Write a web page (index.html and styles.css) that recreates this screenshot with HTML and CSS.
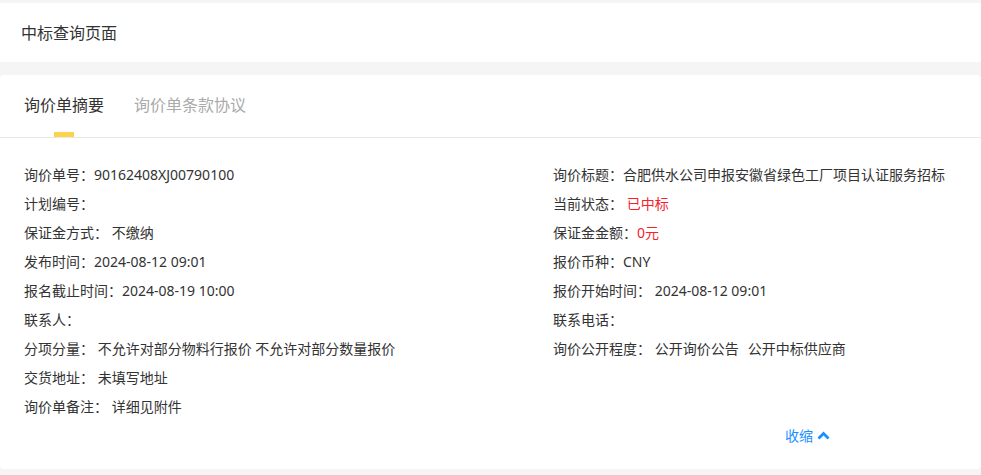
FILE: index.html
```html
<!DOCTYPE html>
<html lang="zh-CN">
<head>
    <meta charset="UTF-8">
    <meta name="viewport" content="width=device-width, initial-scale=1.0">
    <title>中标查询页面</title>
    <link rel="stylesheet" href="styles.css">
</head>
<body>
    <div class="page-header">中标查询页面</div>

    <div class="card">
        <div class="tabs">
            <div class="tab active">询价单摘要</div>
            <div class="tab">询价单条款协议</div>
        </div>

        <div class="summary">
            <div class="col">
                <div class="row"><span class="label">询价单号：</span>90162408XJ00790100</div>
                <div class="row"><span class="label">计划编号：</span></div>
                <div class="row"><span class="label">保证金方式：</span> 不缴纳</div>
                <div class="row"><span class="label">发布时间：</span>2024-08-12 09:01</div>
                <div class="row"><span class="label">报名截止时间：</span>2024-08-19 10:00</div>
                <div class="row"><span class="label">联系人：</span></div>
                <div class="row"><span class="label">分项分量：</span> 不允许对部分物料行报价 不允许对部分数量报价</div>
                <div class="row"><span class="label">交货地址：</span> 未填写地址</div>
                <div class="row"><span class="label">询价单备注：</span> 详细见附件</div>
            </div>
            <div class="col">
                <div class="row"><span class="label">询价标题：</span>合肥供水公司申报安徽省绿色工厂项目认证服务招标</div>
                <div class="row"><span class="label">当前状态：</span> <span class="red">已中标</span></div>
                <div class="row"><span class="label">保证金金额：</span><span class="red">0元</span></div>
                <div class="row"><span class="label">报价币种：</span>CNY</div>
                <div class="row"><span class="label">报价开始时间：</span> 2024-08-12 09:01</div>
                <div class="row"><span class="label">联系电话：</span></div>
                <div class="row"><span class="label">询价公开程度：</span> <span class="tag">公开询价公告</span><span class="tag">公开中标供应商</span></div>
            </div>
        </div>

        <div class="toggle">
            <a class="collapse" href="#">收缩
                <svg width="13" height="9" viewBox="0 0 13 9"><polyline points="1.5,7.5 6.5,2.5 11.5,7.5" fill="none" stroke="#1890ff" stroke-width="2.8"/></svg>
            </a>
        </div>
    </div>
</body>
</html>
```

FILE: styles.css
```css
body {
    margin: 0;
    padding-top: 3px;
    background-color: #f5f5f5;
    font-family: "Noto Sans", "Noto Sans CJK SC", sans-serif;
    color: #333;
}

.page-header {
    height: 59px;
    line-height: 60px;
    padding-left: 21px;
    background-color: #fff;
    font-size: 16px;
    margin-bottom: 13px;
}

.card {
    background-color: #fff;
    border-radius: 4px;
    padding-bottom: 19px;
}

.tabs {
    display: flex;
    gap: 30px;
    padding-left: 24px;
    height: 62px;
    border-bottom: 1px solid #e8e8e8;
}

.tab {
    position: relative;
    font-size: 16px;
    line-height: 60px;
    color: #aaa;
}

.tab.active {
    color: #333;
}

.tab.active::after {
    content: "";
    position: absolute;
    left: 50%;
    bottom: 0;
    width: 20px;
    height: 5px;
    margin-left: -10px;
    background-color: #fcd34d;
}

.summary {
    display: grid;
    grid-template-columns: 529px 1fr;
    padding: 22px 24px 0;
    font-size: 14px;
}

.row {
    height: 29px;
    line-height: 29px;
    white-space: pre;
}

.red {
    color: #f5222d;
}

.tag + .tag {
    margin-left: 9px;
}

.toggle {
    display: flex;
    justify-content: flex-end;
    padding-right: 151px;
    height: 29px;
    line-height: 29px;
}

.collapse {
    display: flex;
    align-items: center;
    gap: 4px;
    font-size: 14px;
    color: #1890ff;
    text-decoration: none;
}
```
